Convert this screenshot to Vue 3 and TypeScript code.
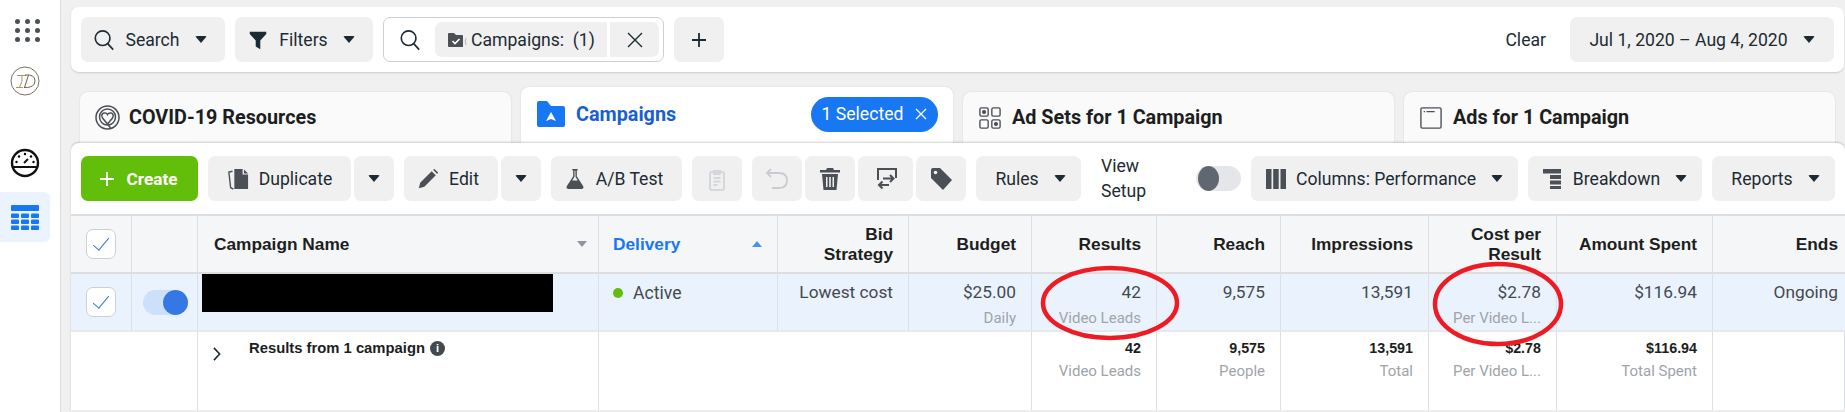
<template>
  <div class="page">
    <aside class="sidebar">
      <div class="dots">
        <span v-for="n in 9" :key="n"></span>
      </div>
      <svg class="logo" viewBox="0 0 30 30">
        <circle cx="15" cy="15" r="14" fill="#fff" stroke="#6b6252" stroke-width="0.9" />
        <path d="M7 9.500h9M12 9.500q1 6-2.500 12M6 21.500h7" fill="none" stroke="#a08a55" stroke-width="0.9" />
        <path d="M15 9q10-1 10 6t-11 6.500M18.500 9l-4 12.500" fill="none" stroke="#5c5340" stroke-width="0.9" />
      </svg>
      <svg class="gauge" viewBox="0 0 30 30">
        <circle cx="15" cy="15" r="13" fill="none" stroke="#111" stroke-width="2.400" />
        <path d="M2.500 19h25" stroke="#111" stroke-width="2" />
        <path d="M14 15l4-4" stroke="#111" stroke-width="2" />
        <circle cx="6.500" cy="14" r="1.200" /><circle cx="9" cy="8.500" r="1.200" /><circle cx="15" cy="6" r="1.200" />
        <circle cx="21" cy="8.500" r="1.200" /><circle cx="23.500" cy="14" r="1.200" />
      </svg>
      <div class="nav-active">
        <svg viewBox="0 0 28 25" width="28" height="25" fill="#1877f2">
          <rect x="0" y="0" width="28" height="6" rx="1" />
          <rect x="0" y="8.500" width="8" height="4.500" rx="1" /><rect x="10" y="8.500" width="8" height="4.500" rx="1" /><rect x="20" y="8.500" width="8" height="4.500" rx="1" />
          <rect x="0" y="14.500" width="8" height="4.500" rx="1" /><rect x="10" y="14.500" width="8" height="4.500" rx="1" /><rect x="20" y="14.500" width="8" height="4.500" rx="1" />
          <rect x="0" y="20.500" width="8" height="4.500" rx="1" /><rect x="10" y="20.500" width="8" height="4.500" rx="1" /><rect x="20" y="20.500" width="8" height="4.500" rx="1" />
        </svg>
      </div>
    </aside>

    <main class="content">
      <section class="topbar">
        <button class="btn nudge-left" style="width: 144px">
          <svg class="ic" viewBox="0 0 24 24" fill="none" stroke="#1c2b33" stroke-width="1.800"><circle cx="10.500" cy="10" r="8" /><path d="M16 16l6 6.500" /></svg>
          <span>Search</span><i class="caret"></i>
        </button>
        <button class="btn nudge-left" style="width: 138px">
          <svg class="ic" viewBox="0 0 24 24" fill="#1c2b33"><path d="M3 3h18v2.500l-6.500 7V22l-5-3v-6.500L3 5.500z" /></svg>
          <span>Filters</span><i class="caret"></i>
        </button>
        <div class="searchbox">
          <svg class="ic" viewBox="0 0 24 24" fill="none" stroke="#1c2b33" stroke-width="1.800"><circle cx="10.500" cy="10" r="8" /><path d="M16 16l6 6.500" /></svg>
          <div class="chip">
            <svg viewBox="0 0 20 20" width="20" height="20"><path d="M1 4q0-1 1-1h5l2 2h6q1 0 1 1v11H2q-1 0-1-1z" fill="#4b4f56" /><path d="M5.500 11l2.500 2.500 4.500-4.500" fill="none" stroke="#fff" stroke-width="1.600" /><path d="M19 8q-1.500 3 0 7" fill="none" stroke="#bbb" stroke-width="1.200" /></svg>
            <span>Campaigns:&nbsp; (1)</span>
          </div>
          <div class="chip-x">
            <svg viewBox="0 0 16 16" width="16" height="16" stroke="#1c2b33" stroke-width="1.400"><path d="M1 1l14 14M15 1L1 15" /></svg>
          </div>
        </div>
        <button class="btn plus">
          <svg viewBox="0 0 14 14" width="14" height="14" stroke="#1c2b33" stroke-width="1.800"><path d="M7 0v14M0 7h14" /></svg>
        </button>
        <span class="clear">Clear</span>
        <button class="btn date">
          <span>Jul 1, 2020 – Aug 4, 2020</span><i class="caret"></i>
        </button>
      </section>

      <nav class="tabs">
        <div class="tab covid">
          <svg class="ic-lg" viewBox="0 0 25 25" fill="none" stroke="#4b4f56" stroke-width="1.500"><circle cx="12.500" cy="12.500" r="11.500" /><circle cx="12.500" cy="12" r="8" /><path d="M12.500 19l-5-6q-2-4 1.500-5 2.500-.5 3.500 1.500 1-2 3.500-1.500 3.500 1 1.500 5l-5 6 3 4" /></svg>
          <span>COVID-19 Resources</span>
        </div>
        <div class="tab active">
          <svg class="ic-folder" viewBox="0 0 28 26"><path d="M0 2q0-2 2-2h8l4 5h12q2 0 2 2v17q0 2-2 2H2q-2 0-2-2z" fill="#1877f2" /><path d="M14 11l5 9-5-2-5 2z" fill="#fff" /></svg>
          <span class="tab-title">Campaigns</span>
          <span class="selected">1 Selected
            <svg viewBox="0 0 12 12" width="12" height="12" stroke="#fff" stroke-width="1.300"><path d="M1 1l10 10M11 1L1 11" /></svg>
          </span>
        </div>
        <div class="tab">
          <svg class="ic-sm" viewBox="0 0 24 24" fill="none" stroke="#4b4f56" stroke-width="1.500">
            <rect x="1" y="1" width="9" height="9" rx="1.500" /><rect x="14" y="1" width="9" height="9" rx="1.500" /><rect x="1" y="14" width="9" height="9" rx="1.500" /><rect x="14" y="14" width="9" height="9" rx="1.500" />
            <circle cx="5.500" cy="5.500" r="1.500" fill="#4b4f56" /><circle cx="18.500" cy="18.500" r="1.500" fill="#4b4f56" />
          </svg>
          <span>Ad Sets for 1 Campaign</span>
        </div>
        <div class="tab">
          <svg class="ic-sm" viewBox="0 0 24 24" fill="none" stroke="#4b4f56" stroke-width="1.500"><rect x="1" y="1" width="22" height="22" rx="1.500" /><path d="M4 5h1.500M7 5h9" /></svg>
          <span>Ads for 1 Campaign</span>
        </div>
      </nav>

      <section class="panel">
        <div class="toolbar">
          <button class="btn create">
            <svg viewBox="0 0 14 14" width="14" height="14" stroke="#fff" stroke-width="1.800"><path d="M7 0v14M0 7h14" /></svg>
            <span>Create</span>
          </button>
          <div class="split">
            <button class="btn" style="width: 143px">
              <svg class="ic" viewBox="0 0 24 24"><path d="M8 1h9v6h6v16H8z" fill="#4b4f56" /><path d="M18.500 1.500L23 6h-4.500z" fill="#4b4f56" /><path d="M6 3.500L2 4.500l2 17 3 1.500" fill="none" stroke="#4b4f56" stroke-width="1.500" /></svg>
              <span>Duplicate</span>
            </button>
            <button class="btn drop"><i class="caret"></i></button>
          </div>
          <div class="split">
            <button class="btn nudge-left" style="width: 94px">
              <svg class="ic" viewBox="0 0 24 24" fill="#4b4f56"><path d="M2 22l1.500-6L16 3.500l4.500 4.500L8 20.500zM17.500 2l1.500-1 4 4-1 1.500z" /></svg>
              <span>Edit</span>
            </button>
            <button class="btn drop"><i class="caret"></i></button>
          </div>
          <button class="btn nudge-left" style="width: 131px">
            <svg class="ic" viewBox="0 0 24 24" fill="#4b4f56"><path d="M9 1h6v1.500h-1V9l7 11q1 3-2 3H5q-3 0-2-3l7-11V2.500H9zM11.500 3v6.500L9 13.500h6l-2.500-4V3z" /></svg>
            <span>A/B Test</span>
          </button>
          <button class="btn square">
            <svg viewBox="0 0 24 24" width="24" height="24" fill="none" stroke="#d4d7db" stroke-width="2"><rect x="5" y="5" width="14" height="18" rx="2" /><path d="M9 4h6v3H9zM8.500 11h7M8.500 14.500h7M8.500 18h4" /></svg>
          </button>
          <div class="split">
            <button class="btn square">
              <svg viewBox="0 0 24 24" width="24" height="24" fill="none" stroke="#c8ccd1" stroke-width="1.800"><path d="M2 6h12q8 0 8 7.500T14 21H7M6 2L2 6l4 4" /></svg>
            </button>
            <button class="btn square">
              <svg viewBox="0 0 24 24" width="24" height="24" fill="#4b4f56"><path d="M9 1h6l1 2h6v2.500H2V3h6zM4 7h16l-1.500 16h-13zM8 10v10h1.500V10zm3.200 0v10h1.600V10zm3.300 0v10H16V10z" fill-rule="evenodd" /></svg>
            </button>
            <button class="btn square" style="width: 55px">
              <svg viewBox="0 0 24 24" width="24" height="24" fill="none" stroke="#4b4f56" stroke-width="2"><path d="M4 13V2h18v9M9 11.500h10M16 8l3.500 3.500L16 15M15 18H5M8.500 14.500L5 18l3.500 3.500" /></svg>
            </button>
            <button class="btn square">
              <svg viewBox="0 0 24 24" width="24" height="24" fill="#4b4f56"><path d="M2 3q0-2 2-2h7l12 12-9 10L2 11z" /><circle cx="6.500" cy="5.500" r="1.800" fill="#f0f0f0" /></svg>
            </button>
          </div>
          <button class="btn nudge-right" style="width: 105px"><span>Rules</span><i class="caret"></i></button>
          <div class="view-setup">View<br />Setup</div>
          <div class="switch"><span></span></div>
          <button class="btn" style="width: 267px">
            <svg viewBox="0 0 20 20" width="20" height="20" fill="#4b4f56"><rect x="0" y="0" width="5.500" height="20" /><rect x="7.200" y="0" width="5.500" height="20" /><rect x="14.500" y="0" width="5.500" height="20" /></svg>
            <span>Columns: Performance</span><i class="caret"></i>
          </button>
          <button class="btn" style="width: 174px">
            <svg viewBox="0 0 20 20" width="20" height="20" fill="#4b4f56"><rect x="0" y="0" width="18" height="4.500" /><rect x="7" y="6" width="11" height="4" /><rect x="7" y="11.500" width="11" height="4" /><rect x="7" y="17" width="11" height="3" /></svg>
            <span>Breakdown</span><i class="caret"></i>
          </button>
          <button class="btn nudge-right" style="width: 123px"><span>Reports</span><i class="caret"></i></button>
        </div>

        <div class="table">
          <div class="cell head center"><span class="check"></span></div>
          <div class="cell head"></div>
          <div class="cell head name">
            <span>Campaign Name</span><i class="sort down"></i>
          </div>
          <div class="cell head delivery">
            <span>Delivery</span><i class="sort up"></i>
          </div>
          <div v-for="c in columns" :key="c.key" class="cell head right">
            <span v-html="c.title"></span>
          </div>

          <div class="cell row center"><span class="check"></span></div>
          <div class="cell row center">
            <div class="switch on"><span></span></div>
          </div>
          <div class="cell row redacted-cell"><div class="redacted"></div></div>
          <div class="cell row status"><i class="dot"></i><span>Active</span></div>
          <div v-for="c in columns" :key="c.key" class="cell row right stack">
            <span class="val">{{ c.value }}</span>
            <span v-if="c.sub" class="sub">{{ c.sub }}</span>
          </div>

          <div class="cell foot span2"></div>
          <div class="cell foot summary">
            <svg viewBox="0 0 9 16" width="8" height="14" fill="none" stroke="#1c2b33" stroke-width="1.800"><path d="M1 1l6.500 7L1 15" /></svg>
            <span class="summary-text">Results from 1 campaign</span>
            <i class="info">i</i>
          </div>
          <div class="cell foot span3"></div>
          <div v-for="c in columns.slice(2)" :key="c.key" class="cell foot right stack">
            <b class="total">{{ c.total }}</b>
            <span class="sub">{{ c.totalSub }}</span>
          </div>
        </div>
      </section>
    </main>

    <!-- hand drawn annotations on top of the screenshot -->
    <svg class="marks" viewBox="0 0 1845 412" width="1845" height="412">
      <ellipse cx="1110" cy="303" rx="67" ry="35" fill="none" stroke="#ed1c24" stroke-width="4.500" />
      <ellipse cx="1498" cy="304" rx="63" ry="40" fill="none" stroke="#ed1c24" stroke-width="4.500" />
    </svg>
  </div>
</template>

<script setup lang="ts">
interface Column {
  key: string;
  title: string;
  value: string;
  sub?: string;
  total?: string;
  totalSub?: string;
}

const columns: Column[] = [
  { key: "bid", title: "Bid<br>Strategy", value: "Lowest cost" },
  { key: "budget", title: "Budget", value: "$25.00", sub: "Daily" },
  { key: "results", title: "Results", value: "42", sub: "Video Leads", total: "42", totalSub: "Video Leads" },
  { key: "reach", title: "Reach", value: "9,575", total: "9,575", totalSub: "People" },
  { key: "impr", title: "Impressions", value: "13,591", total: "13,591", totalSub: "Total" },
  { key: "cost", title: "Cost per<br>Result", value: "$2.78", sub: "Per Video L...", total: "$2.78", totalSub: "Per Video L..." },
  { key: "spent", title: "Amount Spent", value: "$116.94", total: "$116.94", totalSub: "Total Spent" },
  { key: "ends", title: "Ends", value: "Ongoing" },
];
</script>

<style>
body {
  margin: 0;
  overflow: hidden;
}
</style>

<style scoped>
.page {
  position: relative;
  display: flex;
  width: 1845px;
  height: 412px;
  overflow: hidden;
  background: #f0f0f0;
  font-family: Roboto, "Liberation Sans", sans-serif;
  font-size: 17.6px;
  color: #1c2b33;
}
.sidebar {
  flex: none;
  width: 60px;
  background: #fff;
  border-right: 1px solid #dcdcdc;
  display: flex;
  flex-direction: column;
  align-items: flex-start;
}
.dots {
  display: grid;
  grid-template-columns: repeat(3, 5px);
  gap: 4px 5px;
  margin: 19px 0 0 15px;
}
.dots span {
  width: 5px;
  height: 5px;
  border-radius: 50%;
  background: #4b4f56;
}
.logo {
  width: 30px;
  height: 30px;
  margin: 24px 0 0 10px;
}
.gauge {
  width: 30px;
  height: 30px;
  margin: 52px 0 0 10px;
}
.nav-active {
  width: 50px;
  height: 50px;
  margin-top: 14px;
  border-radius: 0 6px 6px 0;
  background: #ebf3fe;
  display: flex;
  align-items: center;
  justify-content: center;
}
.content {
  flex: 1;
  min-width: 0;
  padding: 7px 0 0 10px;
}
.btn {
  flex: none;
  display: flex;
  align-items: center;
  justify-content: center;
  gap: 10px;
  height: 45px;
  padding: 0;
  border: 0;
  border-radius: 7px;
  background: #f0f0f0;
  font: inherit;
  color: inherit;
}
.nudge-left {
  padding-right: 6px;
}
.nudge-right {
  padding-left: 4px;
}
.ic {
  width: 22px;
  height: 24px;
  flex: none;
}
.ic-sm {
  width: 22px;
  height: 22px;
  flex: none;
}
.ic-lg {
  width: 25px;
  height: 25px;
  flex: none;
  margin-left: -1px;
  margin-right: -2px;
}
.caret {
  width: 0;
  height: 0;
  margin-left: 5px;
  border-left: 6px solid transparent;
  border-right: 6px solid transparent;
  border-top: 7px solid #1c2b33;
  border-radius: 2px;
}
.topbar {
  display: flex;
  align-items: center;
  gap: 10px;
  height: 65px;
  margin-right: 1px;
  padding: 0 10px;
  background: #fff;
  border-radius: 8px;
  box-shadow: 0 1px 2px rgba(0, 0, 0, 0.15);
  box-sizing: border-box;
}
.searchbox {
  flex: none;
  width: 281px;
  height: 45px;
  box-sizing: border-box;
  display: flex;
  align-items: center;
  border: 1px solid #ccd0d5;
  border-radius: 7px;
}
.searchbox .ic {
  margin: 0 14px 0 15px;
}
.chip {
  width: 172px;
  height: 35px;
  display: flex;
  align-items: center;
  gap: 4px;
  padding-left: 12px;
  box-sizing: border-box;
  background: #f0f0f0;
  border-radius: 7px 0 0 7px;
  white-space: nowrap;
}
.chip-x {
  width: 49px;
  height: 35px;
  margin-left: 3px;
  display: flex;
  align-items: center;
  justify-content: center;
  background: #f0f0f0;
  border-radius: 0 7px 7px 0;
}
.plus {
  width: 50px;
}
.clear {
  margin-left: auto;
  margin-right: 14px;
}
.date {
  width: 264px;
}
.tabs {
  display: flex;
  align-items: flex-end;
  gap: 10px;
  height: 56px;
  margin-top: 15px;
  padding-left: 9px;
}
.tab {
  width: 431px;
  height: 51px;
  display: flex;
  align-items: center;
  gap: 11px;
  padding: 0 16px;
  box-sizing: border-box;
  background: #fafafa;
  border-radius: 8px 8px 0 0;
  font-weight: 700;
  font-size: 19.8px;
  color: #1c1e21;
  box-shadow: 0 0 2px rgba(0, 0, 0, 0.12);
}
.tab.active {
  width: 432px;
  height: 56px;
  background: #fff;
  padding-bottom: 2px;
  padding-right: 15px;
}
.ic-folder {
  width: 28px;
  height: 26px;
}
.tab-title {
  color: #1a5fd0;
}
.selected {
  margin-left: auto;
  width: 127px;
  height: 35px;
  display: flex;
  align-items: center;
  justify-content: center;
  gap: 12px;
  border-radius: 18px;
  background: #1877f2;
  color: #fff;
  font-weight: 400;
  font-size: 17.6px;
  white-space: nowrap;
}
.panel {
  background: #fff;
  border-radius: 8px 8px 0 0;
  box-shadow: 0 -1px 2px rgba(0, 0, 0, 0.18);
  position: relative;
  height: 269px;
}
.toolbar {
  display: flex;
  align-items: center;
  gap: 10px;
  height: 71px;
  padding: 0 10px;
  box-sizing: border-box;
}
.create {
  width: 117px;
  padding-right: 2px;
  background: #63be09;
  color: #fff;
  font-weight: 700;
  font-size: 17.2px;
  gap: 13px;
}
.split {
  display: flex;
  gap: 3px;
}
.drop {
  width: 40px;
}
.drop .caret {
  margin: 0;
}
.square {
  width: 50px;
}
.view-setup {
  width: 97px;
  margin-left: 10px;
  line-height: 25px;
}
.switch {
  flex: none;
  width: 45px;
  height: 25px;
  border-radius: 13px;
  background: #e4e6e9;
  position: relative;
}
.switch span {
  position: absolute;
  left: 2px;
  top: 0;
  width: 21px;
  height: 25px;
  border-radius: 50%;
  background: #606770;
}
.switch.on {
  background: #cce0fb;
  margin-left: 1px;
}
.switch.on span {
  left: 20px;
  width: 25px;
  background: #3578e5;
}
.table {
  display: grid;
  grid-template-columns: 61px 66px 401px 179px 131px 123px 125px 124px 148px 128px 156px 1fr;
  grid-template-rows: 58px 58px 78px;
  border-top: 2px solid #ddd;
  border-bottom: 2px solid #ededed;
}
.cell {
  box-sizing: border-box;
  border-right: 1px solid #dcdfe3;
  padding: 0 15px 0 15px;
  min-width: 0;
}
.cell:nth-child(12n) {
  border-right: 0;
  padding-right: 7px;
}
.head {
  background: #f5f6f7;
  border-bottom: 2px solid #ddd;
  display: flex;
  align-items: center;
  font-family: "Liberation Sans", Arial, sans-serif;
  font-weight: 700;
  font-size: 17.3px;
  line-height: 20px;
  color: #1c1e21;
}
.name {
  justify-content: space-between;
  padding-left: 16px;
  padding-right: 11px;
}
.delivery {
  justify-content: space-between;
  padding-left: 14px;
  padding-right: 15px;
  color: #1877f2;
}
.sort {
  width: 0;
  height: 0;
  border-left: 5px solid transparent;
  border-right: 5px solid transparent;
}
.sort.down {
  border-top: 6px solid #90949c;
}
.sort.up {
  border-bottom: 6px solid #4a90f0;
}
.right {
  justify-content: flex-end;
  text-align: right;
}
.center {
  display: flex;
  align-items: center;
  justify-content: center;
}
.check {
  width: 30px;
  height: 30px;
  box-sizing: border-box;
  border: 1px solid #ccd0d5;
  border-radius: 7px;
  background: #fff;
  position: relative;
}
.check::after {
  content: "";
  position: absolute;
  left: 10px;
  top: 4px;
  width: 7px;
  height: 15px;
  border-right: 1.5px solid #3578e5;
  border-bottom: 1.5px solid #3578e5;
  transform: rotate(40deg);
}
.row {
  background: #eaf3fd;
  border-bottom: 2px solid #e6e8ea;
}
.row.center {
  padding: 0;
}
.redacted-cell {
  padding: 0 0 0 4px;
}
.redacted {
  width: 351px;
  height: 38px;
  background: #000;
}
.status {
  display: flex;
  align-items: flex-start;
  gap: 10px;
  padding-left: 14px;
  padding-top: 9px;
  color: #444950;
}
.dot {
  width: 10px;
  height: 10px;
  margin-top: 5px;
  border-radius: 50%;
  background: #63be09;
}
.stack {
  display: flex;
  flex-direction: column;
  align-items: flex-end;
  justify-content: flex-start;
}
.row.right {
  padding-top: 9px;
}
.val {
  font-size: 17.3px;
  line-height: 19px;
  color: #444950;
}
.sub {
  font-size: 15px;
  line-height: 18px;
  color: #a0a4a9;
  white-space: nowrap;
}
.row .sub {
  margin-top: 7px;
}
.foot {
  padding-top: 8px;
}
.foot .sub {
  margin-top: 5px;
}
.span2 {
  grid-column: span 2;
}
.span3 {
  grid-column: span 3;
}
.total {
  font-family: "Liberation Sans", Arial, sans-serif;
  font-size: 14.3px;
  line-height: 17px;
  color: #1c1e21;
}
.summary {
  display: flex;
  align-items: flex-start;
  padding-left: 15px;
  font-family: "Liberation Sans", Arial, sans-serif;
}
.summary svg {
  margin-top: 7px;
}
.summary-text {
  margin-left: 28px;
  font-size: 14.8px;
  font-weight: 700;
  line-height: 17px;
  color: #1c1e21;
}
.info {
  width: 15px;
  height: 15px;
  margin-left: 5px;
  margin-top: 1px;
  border-radius: 50%;
  background: #444950;
  color: #fff;
  font-size: 11px;
  font-style: normal;
  font-weight: 700;
  text-align: center;
  line-height: 15px;
}
.marks {
  position: absolute;
  left: 0;
  top: 0;
  pointer-events: none;
}
</style>
